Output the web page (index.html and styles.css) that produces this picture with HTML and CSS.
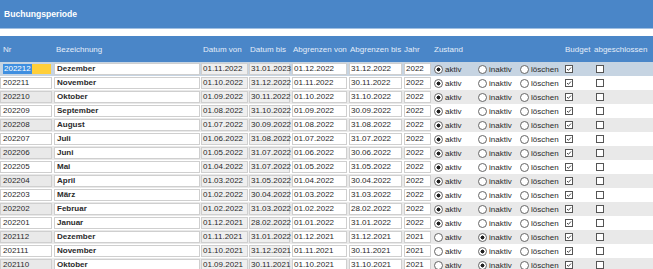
FILE: index.html
```html
<!DOCTYPE html>
<html lang="de">
<head>
    <meta charset="UTF-8">
    <title>Buchungsperiode</title>
    <link rel="stylesheet" href="styles.css">
</head>
<body>
    <div class="title">Buchungsperiode</div>
    <div class="head">
        <span class="h-nr">Nr</span>
        <span class="h-bez">Bezeichnung</span>
        <span class="h-dv">Datum von</span>
        <span class="h-db">Datum bis</span>
        <span class="h-av">Abgrenzen von</span>
        <span class="h-ab">Abgrenzen bis</span>
        <span class="h-jahr">Jahr</span>
        <span class="h-zust">Zustand</span>
        <span class="h-bud">Budget</span>
        <span class="h-abg">abgeschlossen</span>
    </div>

    <div class="row sel">
        <span class="box nr first"><span class="mark">202212</span><span class="yellow"></span></span>
        <span class="box bez">Dezember</span>
        <span class="box grey">01.11.2022</span>
        <span class="box grey">31.01.2023</span>
        <span class="box av">01.12.2022</span>
        <span class="box ab">31.12.2022</span>
        <span class="box jahr">2022</span>
        <span class="rad on">aktiv</span><span class="rad">inaktiv</span><span class="rad">löschen</span>
        <span class="chk on"></span><span class="chk off"></span>
    </div>
    <div class="row">
        <span class="box nr">202211</span>
        <span class="box bez">November</span>
        <span class="box grey">01.10.2022</span>
        <span class="box grey">31.12.2022</span>
        <span class="box av">01.11.2022</span>
        <span class="box ab">30.11.2022</span>
        <span class="box jahr">2022</span>
        <span class="rad on">aktiv</span><span class="rad">inaktiv</span><span class="rad">löschen</span>
        <span class="chk on"></span><span class="chk off"></span>
    </div>
    <div class="row alt">
        <span class="box nr">202210</span>
        <span class="box bez">Oktober</span>
        <span class="box grey">01.09.2022</span>
        <span class="box grey">30.11.2022</span>
        <span class="box av">01.10.2022</span>
        <span class="box ab">31.10.2022</span>
        <span class="box jahr">2022</span>
        <span class="rad on">aktiv</span><span class="rad">inaktiv</span><span class="rad">löschen</span>
        <span class="chk on"></span><span class="chk off"></span>
    </div>
    <div class="row">
        <span class="box nr">202209</span>
        <span class="box bez">September</span>
        <span class="box grey">01.08.2022</span>
        <span class="box grey">31.10.2022</span>
        <span class="box av">01.09.2022</span>
        <span class="box ab">30.09.2022</span>
        <span class="box jahr">2022</span>
        <span class="rad on">aktiv</span><span class="rad">inaktiv</span><span class="rad">löschen</span>
        <span class="chk on"></span><span class="chk off"></span>
    </div>
    <div class="row alt">
        <span class="box nr">202208</span>
        <span class="box bez">August</span>
        <span class="box grey">01.07.2022</span>
        <span class="box grey">30.09.2022</span>
        <span class="box av">01.08.2022</span>
        <span class="box ab">31.08.2022</span>
        <span class="box jahr">2022</span>
        <span class="rad on">aktiv</span><span class="rad">inaktiv</span><span class="rad">löschen</span>
        <span class="chk on"></span><span class="chk off"></span>
    </div>
    <div class="row">
        <span class="box nr">202207</span>
        <span class="box bez">Juli</span>
        <span class="box grey">01.06.2022</span>
        <span class="box grey">31.08.2022</span>
        <span class="box av">01.07.2022</span>
        <span class="box ab">31.07.2022</span>
        <span class="box jahr">2022</span>
        <span class="rad on">aktiv</span><span class="rad">inaktiv</span><span class="rad">löschen</span>
        <span class="chk on"></span><span class="chk off"></span>
    </div>
    <div class="row alt">
        <span class="box nr">202206</span>
        <span class="box bez">Juni</span>
        <span class="box grey">01.05.2022</span>
        <span class="box grey">31.07.2022</span>
        <span class="box av">01.06.2022</span>
        <span class="box ab">30.06.2022</span>
        <span class="box jahr">2022</span>
        <span class="rad on">aktiv</span><span class="rad">inaktiv</span><span class="rad">löschen</span>
        <span class="chk on"></span><span class="chk off"></span>
    </div>
    <div class="row">
        <span class="box nr">202205</span>
        <span class="box bez">Mai</span>
        <span class="box grey">01.04.2022</span>
        <span class="box grey">31.07.2022</span>
        <span class="box av">01.05.2022</span>
        <span class="box ab">31.05.2022</span>
        <span class="box jahr">2022</span>
        <span class="rad on">aktiv</span><span class="rad">inaktiv</span><span class="rad">löschen</span>
        <span class="chk on"></span><span class="chk off"></span>
    </div>
    <div class="row alt">
        <span class="box nr">202204</span>
        <span class="box bez">April</span>
        <span class="box grey">01.03.2022</span>
        <span class="box grey">31.05.2022</span>
        <span class="box av">01.04.2022</span>
        <span class="box ab">30.04.2022</span>
        <span class="box jahr">2022</span>
        <span class="rad on">aktiv</span><span class="rad">inaktiv</span><span class="rad">löschen</span>
        <span class="chk on"></span><span class="chk off"></span>
    </div>
    <div class="row">
        <span class="box nr">202203</span>
        <span class="box bez">März</span>
        <span class="box grey">01.02.2022</span>
        <span class="box grey">30.04.2022</span>
        <span class="box av">01.03.2022</span>
        <span class="box ab">31.03.2022</span>
        <span class="box jahr">2022</span>
        <span class="rad on">aktiv</span><span class="rad">inaktiv</span><span class="rad">löschen</span>
        <span class="chk on"></span><span class="chk off"></span>
    </div>
    <div class="row alt">
        <span class="box nr">202202</span>
        <span class="box bez">Februar</span>
        <span class="box grey">01.02.2022</span>
        <span class="box grey">31.03.2022</span>
        <span class="box av">01.02.2022</span>
        <span class="box ab">28.02.2022</span>
        <span class="box jahr">2022</span>
        <span class="rad on">aktiv</span><span class="rad">inaktiv</span><span class="rad">löschen</span>
        <span class="chk on"></span><span class="chk off"></span>
    </div>
    <div class="row">
        <span class="box nr">202201</span>
        <span class="box bez">Januar</span>
        <span class="box grey">01.12.2021</span>
        <span class="box grey">28.02.2022</span>
        <span class="box av">01.01.2022</span>
        <span class="box ab">31.01.2022</span>
        <span class="box jahr">2022</span>
        <span class="rad on">aktiv</span><span class="rad">inaktiv</span><span class="rad">löschen</span>
        <span class="chk on"></span><span class="chk off"></span>
    </div>
    <div class="row alt">
        <span class="box nr">202112</span>
        <span class="box bez">Dezember</span>
        <span class="box grey">01.11.2021</span>
        <span class="box grey">31.01.2022</span>
        <span class="box av">01.12.2021</span>
        <span class="box ab">31.12.2021</span>
        <span class="box jahr">2021</span>
        <span class="rad">aktiv</span><span class="rad on">inaktiv</span><span class="rad">löschen</span>
        <span class="chk on"></span><span class="chk off"></span>
    </div>
    <div class="row">
        <span class="box nr">202111</span>
        <span class="box bez">November</span>
        <span class="box grey">01.10.2021</span>
        <span class="box grey">31.12.2021</span>
        <span class="box av">01.11.2021</span>
        <span class="box ab">30.11.2021</span>
        <span class="box jahr">2021</span>
        <span class="rad">aktiv</span><span class="rad on">inaktiv</span><span class="rad">löschen</span>
        <span class="chk on"></span><span class="chk off"></span>
    </div>
    <div class="row alt">
        <span class="box nr">202110</span>
        <span class="box bez">Oktober</span>
        <span class="box grey">01.09.2021</span>
        <span class="box grey">30.11.2021</span>
        <span class="box av">01.10.2021</span>
        <span class="box ab">31.10.2021</span>
        <span class="box jahr">2021</span>
        <span class="rad">aktiv</span><span class="rad on">inaktiv</span><span class="rad">löschen</span>
        <span class="chk on"></span><span class="chk off"></span>
    </div>
</body>
</html>
```

FILE: styles.css
```css
*{
    margin: 0;
    padding: 0;
    box-sizing: border-box;
}
body{
    background: #fff;
    font-family: "Liberation Sans", Arial, sans-serif;
    font-size: 8px;
    color: #2a2a2a;
    overflow: hidden;
}
.title{
    height: 29px;
    background: #4a86c8;
    border-bottom: 1px solid #9fbfe2;
    color: #fff;
    font-weight: bold;
    font-size: 8.6px;
    padding-left: 4px;
    display: flex;
    align-items: center;
}
.head, .row{
    display: grid;
    grid-template-columns: 53px 148px 48px 42px 58px 54px 29px 44px 42px 44px 30px 1fr;
    align-items: center;
}
.head{
    margin-top: 7px;
    height: 26px;
    background: #4a86c8;
    color: #e4edf8;
}
.h-nr{ padding-left: 3px; }
.h-bez{ padding-left: 3px; }
.h-dv{ padding-left: 2px; }
.h-db{ padding-left: 1px; }
.h-av{ padding-left: 2px; }
.h-ab{ padding-left: 1px; }
.h-jahr{ padding-left: 1px; }
.h-zust{ grid-column: span 3; padding-left: 2px; }
.h-bud{ padding-left: 3px; }
.h-abg{ padding-left: 2px; }

.row{
    height: 14px;
    background: #fff;
}
.row.alt{
    background: #e9e9e9;
}
.row.sel{
    background: #c6d4e2;
}
.box{
    display: block;
    height: 12px;
    line-height: 10px;
    border: 1px solid #cfcfcf;
    padding: 0 1px;
    white-space: nowrap;
    overflow: hidden;
}
.nr{
    margin-right: 1px;
    padding-left: 2px;
}
.nr.first{
    display: flex;
    border-color: #c6d4e2;
    padding: 0 0 0 2px;
}
.mark{
    background: #3f8fe0;
    color: #fff;
    width: 29px;
    padding-left: 1px;
}
.yellow{
    flex: 1;
    background: #ffcf3a;
}
.bez{
    margin: 0 1px;
    background: #fff;
    font-weight: bold;
    padding-left: 2px;
}
.grey{
    background: #efefef;
    margin-right: 1px;
    padding: 0 0 0 1px;
    overflow: visible;
}
.av{
    background: #fff;
    margin: 0 2px 0 1px;
}
.ab{
    background: #fff;
    margin-right: 1px;
}
.jahr{
    background: #fff;
    margin: 0 1px 0 1px;
}
.rad{
    display: flex;
    align-items: center;
    gap: 2px;
    padding-left: 2px;
    white-space: nowrap;
}
.rad::before{
    content: "";
    width: 7px;
    height: 7px;
    border: 1px solid #666;
    border-radius: 50%;
    background: #fff;
}
.rad.on::before{
    background: radial-gradient(circle, #222 0 1.8px, #fff 2.2px);
}
.row .rad:nth-of-type(1){ padding-left: 3px; }
.chk{
    display: block;
    width: 8px;
    height: 8px;
    border: 1px solid #555;
    background: #fff;
    margin-left: 4px;
}
.chk.on{
    margin-left: 3px;
    background: #fff url("data:image/svg+xml,%3Csvg xmlns='http://www.w3.org/2000/svg' viewBox='0 0 6 6'%3E%3Cpath d='M1 3l1.4 1.4L5 1.5' fill='none' stroke='%23333' stroke-width='0.9'/%3E%3C/svg%3E") center/6px 6px no-repeat;
}
```
